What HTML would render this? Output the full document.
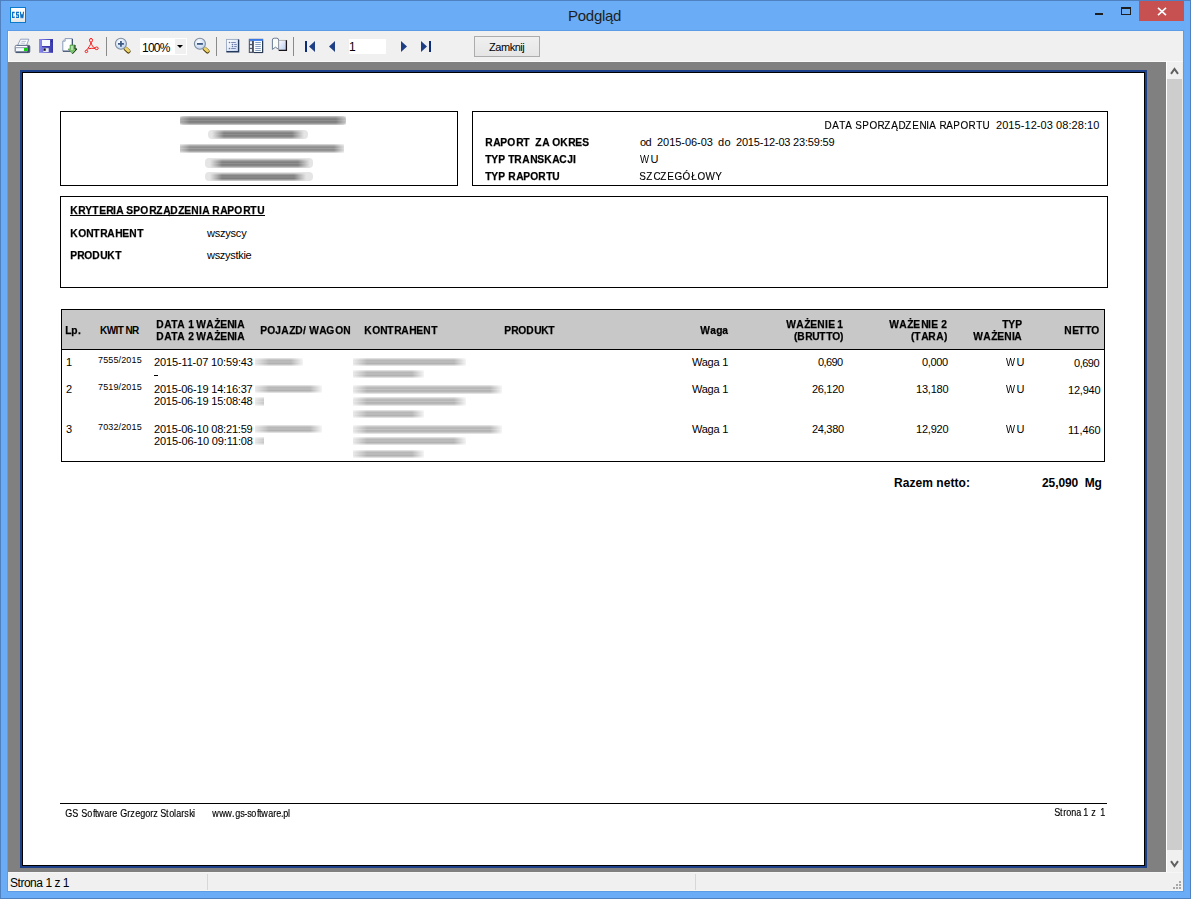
<!DOCTYPE html>
<html><head><meta charset="utf-8">
<style>
*{margin:0;padding:0;box-sizing:border-box}
html,body{width:1191px;height:899px;overflow:hidden;background:#6aacf5;font-family:"Liberation Sans",sans-serif;position:relative}
.a{position:absolute}
.t{position:absolute;white-space:pre;line-height:1;color:#000}
.bx{position:absolute;border:1px solid #000}
.bl{position:absolute;filter:blur(0.5px)}
.n{display:inline-block;transform:scaleX(0.93);-webkit-text-stroke:0.25px #000}
.nr{display:inline-block;transform:scaleX(0.9);-webkit-text-stroke:0.15px #000}
.wW{display:inline-block;transform:scaleX(0.87);transform-origin:0 0;width:10.6px}
</style></head><body>

<div class="a" style="left:0;top:0;width:1191px;height:899px;border:1px solid #4f80c0"></div>
<!-- app icon -->
<div class="a" style="left:10px;top:7px;width:16px;height:16px;border:1px solid #0a7acc;background:linear-gradient(#ffffff,#f4f4f4 60%,#e4e4e4)"></div>
<svg class="a" style="left:12px;top:11px" width="13" height="8" viewBox="0 0 13 8">
 <g fill="none" stroke="#0a6ec4" stroke-width="1.15">
 <path d="M2.1 2.3 V1.4 H0.6 V6.5 H2.1 V5.5"/>
 <path d="M6.4 2.3 V1.4 H4.6 V3.9 H6.4 V6.5 H4.6 V5.5"/>
 <path d="M8.4 0.8 L9.1 7.1 L9.95 3.4 L10.8 7.1 L11.5 0.8"/>
 </g>
</svg>
<!-- window controls -->
<div class="a" style="left:1095px;top:13px;width:8px;height:2px;background:#1e1e1e"></div>
<div class="a" style="left:1121px;top:7px;width:10px;height:8px;border:1px solid #1e1e1e;border-top-width:2px"></div>
<div class="a" style="left:1139px;top:1px;width:45px;height:20px;background:#c75050"></div>
<svg class="a" style="left:1157px;top:7px" width="10" height="9" viewBox="0 0 10 9">
 <path d="M1 0.8 L9 8.2 M9 0.8 L1 8.2" stroke="#fff" stroke-width="1.6"/>
</svg>
<!-- client border -->
<div class="a" style="left:7px;top:30px;width:1177px;height:862px;background:#5c9be6"></div>
<!-- toolbar -->
<div class="a" style="left:8px;top:31px;width:1175px;height:31px;background:#f0f0f0;border-left:1px solid #fbfbfb;border-bottom:1px solid #f9f9f9"></div>
<div class="a" style="left:106px;top:37px;width:1px;height:19px;background:#8a8a8a"></div>
<div class="a" style="left:216px;top:37px;width:1px;height:19px;background:#8a8a8a"></div>
<div class="a" style="left:293px;top:37px;width:1px;height:19px;background:#8a8a8a"></div>
<div class="a" style="left:140px;top:38px;width:47px;height:17px;background:#fff"></div>
<div class="a" style="left:175px;top:39px;width:11px;height:15px;background:#f0f0f0"></div>
<svg class="a" style="left:177px;top:45px" width="6" height="3" viewBox="0 0 6 3"><path d="M0 0 H6 L3 3 Z" fill="#000"/></svg>
<div class="a" style="left:349px;top:39px;width:37px;height:15px;background:#fff"></div>
<!-- nav -->
<svg class="a" style="left:300px;top:38px" width="140" height="18" viewBox="0 0 140 18">
 <rect x="5" y="3" width="2" height="11" fill="#0c2c78"/>
 <path d="M9 8.5 L15 3 V14 Z" fill="#1e3f86"/>
 <path d="M29 8.5 L35 3 V14 Z" fill="#1e3f86"/>
 <path d="M107 8.5 L101 3 V14 Z" fill="#1e3f86"/>
 <path d="M127 8.5 L121 3 V14 Z" fill="#1e3f86"/>
 <rect x="129" y="3" width="2" height="11" fill="#0c2c78"/>
</svg>
<!-- button -->
<div class="a" style="left:474px;top:36px;width:66px;height:21px;border:1px solid #acacac;background:linear-gradient(#f0f0f0,#e5e5e5)"></div>
<!-- view area -->
<div class="a" style="left:8px;top:61px;width:1159px;height:1px;background:#f9f9f9"></div>
<div class="a" style="left:8px;top:62px;width:1158px;height:810px;background:#808080"></div>
<div class="a" style="left:1166px;top:61px;width:1px;height:811px;background:#ffffff"></div>
<!-- vscroll -->
<div class="a" style="left:1167px;top:62px;width:15px;height:810px;background:#f0f0f0"></div>
<div class="a" style="left:1182px;top:62px;width:1px;height:810px;background:#ecebe8"></div>
<div class="a" style="left:1167px;top:79px;width:15px;height:771px;background:#cdcdcd"></div>
<svg class="a" style="left:1170px;top:67px" width="9" height="8" viewBox="0 0 9 8"><path d="M1 6.8 L4.5 2 L8 6.8" fill="none" stroke="#606060" stroke-width="2"/></svg>
<svg class="a" style="left:1170px;top:860px" width="9" height="8" viewBox="0 0 9 8"><path d="M1 1.2 L4.5 6 L8 1.2" fill="none" stroke="#606060" stroke-width="2"/></svg>
<!-- status -->
<div class="a" style="left:8px;top:872px;width:1175px;height:19px;background:#f0f0f0;border-top:1px solid #f6f6f6;border-bottom:1px solid #f8f6f2"></div>
<div class="a" style="left:207px;top:874px;width:1px;height:16px;background:#d7d7d7"></div>
<div class="a" style="left:695px;top:874px;width:1px;height:16px;background:#d7d7d7"></div>
<div class="a" style="left:1179px;top:881px;width:2px;height:2px;background:#a8a8a8"></div>
<div class="a" style="left:1176px;top:884px;width:2px;height:2px;background:#a8a8a8"></div>
<div class="a" style="left:1179px;top:884px;width:2px;height:2px;background:#a8a8a8"></div>
<div class="a" style="left:1173px;top:887px;width:2px;height:2px;background:#a8a8a8"></div>
<div class="a" style="left:1176px;top:887px;width:2px;height:2px;background:#a8a8a8"></div>
<div class="a" style="left:1179px;top:887px;width:2px;height:2px;background:#a8a8a8"></div>
<!-- page -->
<div class="a" style="left:20px;top:70px;width:1127px;height:798px;border:2px solid #1c3f8a;background:#000"></div>
<div class="a" style="left:23px;top:73px;width:1121px;height:792px;background:#fff"></div>


<!-- printer -->
<svg class="a" style="left:12px;top:36px" width="20" height="20" viewBox="0 0 20 20">
 <path d="M8.5 3.2 H16.8 L14.6 9.4 H5.6 Z" fill="#fbfcff" stroke="#8a9ab8" stroke-width="0.9"/>
 <path d="M9.5 5.4 H14 M8.6 7.2 H13" stroke="#a8b4c8" stroke-width="0.8"/>
 <rect x="3.2" y="9.4" width="14.6" height="7.2" rx="1.2" fill="#e8eef8" stroke="#50607a" stroke-width="0.9"/>
 <rect x="3.8" y="10" width="11.5" height="1.4" fill="#ffffff"/>
 <rect x="3.8" y="11.4" width="11.5" height="0.9" fill="#6a7890"/>
 <rect x="4" y="12.3" width="8" height="3.2" fill="#f4f8ff"/>
 <rect x="12" y="12" width="3" height="3" fill="#10d010"/>
 <rect x="15.4" y="9.6" width="2.3" height="7" fill="#3a4a66"/>
 <rect x="4" y="15.4" width="12" height="1.3" fill="#3a4a66"/>
</svg>
<!-- floppy -->
<svg class="a" style="left:36px;top:36px" width="20" height="20" viewBox="0 0 20 20">
 <defs><linearGradient id="fg" x1="0" y1="0" x2="1" y2="0"><stop offset="0" stop-color="#8c8cf2"/><stop offset="1" stop-color="#3434a8"/></linearGradient></defs>
 <rect x="3" y="3" width="14" height="13.8" fill="url(#fg)"/>
 <rect x="6" y="4" width="8" height="6.2" fill="#f6f8ff"/>
 <rect x="6" y="10.2" width="8" height="0.9" fill="#2a2aa0"/>
 <rect x="7.3" y="12.2" width="5.4" height="3.8" fill="#e8ecf8"/>
 <rect x="7.5" y="12.4" width="2.2" height="2.4" fill="#111"/>
 <rect x="15.1" y="4.8" width="1" height="1" fill="#222"/>
</svg>
<!-- export -->
<svg class="a" style="left:60px;top:36px" width="20" height="20" viewBox="0 0 20 20">
 <path d="M5.2 2.6 H12.3 V15.2 H2.8 V5.2 Z" fill="#fdfeff" stroke="#7c8fb0" stroke-width="0.9"/>
 <path d="M12.3 3 V15.2 H3" fill="none" stroke="#2e3f5e" stroke-width="1"/>
 <path d="M5.2 2.6 V5.2 H2.8" fill="#dfe8f0" stroke="#7c8fb0" stroke-width="0.8"/>
 <path d="M10 9 H15 V13 H17 L12.5 17.8 L8 13 H10 Z" fill="#78c06c" stroke="#4a9040" stroke-width="0.6"/>
 <path d="M15 9 V13 H17 L12.5 17.8" fill="none" stroke="#1a2a1a" stroke-width="0.9"/>
 <rect x="11.2" y="10" width="1.6" height="4" fill="#c0eab8"/>
</svg>
<!-- pdf -->
<svg class="a" style="left:82px;top:36px" width="20" height="20" viewBox="0 0 20 20">
 <g fill="none" stroke="#f41818" stroke-width="1.0">
 <ellipse cx="9" cy="4.3" rx="1.5" ry="1.9"/>
 <path d="M9 6.2 C9 9 6 12 4.5 14.3"/>
 <path d="M9 6.5 C9.5 9 11 11.3 13 12.2"/>
 <path d="M6.3 12.8 C8.5 12.3 10.8 12.2 13 12.3"/>
 <ellipse cx="14.6" cy="12.3" rx="1.6" ry="1.3"/>
 <ellipse cx="4.4" cy="15.4" rx="1.3" ry="1.2"/>
 </g>
</svg>
<!-- zoom in -->
<svg class="a" style="left:112px;top:36px" width="20" height="20" viewBox="0 0 20 20">
 <defs><radialGradient id="lg" cx="0.4" cy="0.35" r="0.7"><stop offset="0" stop-color="#ffffff"/><stop offset="1" stop-color="#b8d0f0"/></radialGradient></defs>
 <path d="M13.6 12.7 L16.5 15.4" stroke="#4a3808" stroke-width="4.2" stroke-linecap="round"/>
 <path d="M13.7 12.4 L16.5 14.9" stroke="#eed468" stroke-width="3" stroke-linecap="round"/>
 <circle cx="8.9" cy="7.8" r="5.5" fill="url(#lg)" stroke="#7e8c9e" stroke-width="1.1"/>
 <path d="M6 7.9 H11.9 M8.95 5 V10.8" stroke="#3e5a82" stroke-width="1.8"/>
</svg>
<!-- zoom out -->
<svg class="a" style="left:191px;top:36px" width="20" height="20" viewBox="0 0 20 20">
 <path d="M13.6 12.7 L16.5 15.4" stroke="#4a3808" stroke-width="4.2" stroke-linecap="round"/>
 <path d="M13.7 12.4 L16.5 14.9" stroke="#eed468" stroke-width="3" stroke-linecap="round"/>
 <circle cx="8.9" cy="7.8" r="5.5" fill="url(#lg)" stroke="#7e8c9e" stroke-width="1.1"/>
 <path d="M6 7.9 H11.9" stroke="#3e5a82" stroke-width="1.8"/>
</svg>
<!-- outline -->
<svg class="a" style="left:222px;top:36px" width="20" height="20" viewBox="0 0 20 20">
 <defs><linearGradient id="og" x1="0" y1="0" x2="1" y2="1"><stop offset="0" stop-color="#ffffff"/><stop offset="1" stop-color="#c8d8f4"/></linearGradient></defs>
 <rect x="4.5" y="3.4" width="12" height="12" fill="url(#og)" stroke="#9aaac4" stroke-width="0.9"/>
 <path d="M16.6 3.6 V15.8 H4.4" fill="none" stroke="#243a5c" stroke-width="1.4"/>
 <g fill="#6876a0"><circle cx="7.5" cy="6.5" r="0.8"/><circle cx="10.5" cy="8.5" r="0.8"/><circle cx="10.5" cy="10.5" r="0.8"/><circle cx="7.5" cy="12.5" r="0.8"/></g>
 <path d="M9.2 6.5 H13.8 M12.2 8.5 H14.8 M12.2 10.5 H14.8 M9.2 12.5 H13.8" stroke="#6e80ac" stroke-width="0.9"/>
</svg>
<!-- thumbnails -->
<svg class="a" style="left:246px;top:36px" width="20" height="20" viewBox="0 0 20 20">
 <rect x="3.2" y="3.2" width="13.6" height="13.4" fill="#f8fbff" stroke="#44546c" stroke-width="0.8"/>
 <rect x="3" y="3" width="14" height="1.9" fill="#3a78e6"/>
 <rect x="6" y="4.9" width="1.9" height="11.8" fill="#4a5060"/>
 <rect x="3" y="4.9" width="3" height="11.8" fill="#50586a"/>
 <rect x="3.9" y="5.3" width="2.1" height="2.6" fill="#f4f8ff"/>
 <rect x="3.9" y="9.2" width="2.1" height="2.6" fill="#f4f8ff"/>
 <rect x="3.9" y="13.1" width="2.1" height="2.6" fill="#f4f8ff"/>
 <path d="M16.6 4.8 V16.6 H8" fill="none" stroke="#20324e" stroke-width="1"/>
 <path d="M9.3 6.5 H14.8 M9.3 8.5 H14.8 M9.3 10.5 H14.8 M9.3 12.5 H14.8 M9.3 14.5 H14.8" stroke="#7a94b8" stroke-width="0.9"/>
</svg>
<!-- bookmark -->
<svg class="a" style="left:269px;top:35px" width="20" height="20" viewBox="0 0 20 20">
 <defs><linearGradient id="bg2" x1="0" y1="0" x2="1" y2="1"><stop offset="0" stop-color="#ffffff"/><stop offset="1" stop-color="#b4c8f0"/></linearGradient></defs>
 <path d="M3.4 14.4 V5 Q3.4 3.2 5.2 3.2 H7.8 Q9.6 3.2 9.6 5 V14.4 L6.5 12.2 Z" fill="#fafcfa" stroke="#5a6c8a" stroke-width="0.9"/>
 <rect x="9.8" y="5.3" width="7.6" height="10" fill="url(#bg2)" stroke="#9a9a9a" stroke-width="0.7"/>
 <path d="M17.4 5.2 V15.4 H9.8" fill="none" stroke="#1a1418" stroke-width="1.3"/>
</svg>


<div class="bx" style="left:60px;top:111px;width:398px;height:75px"></div>
<div class="bx" style="left:472px;top:111px;width:636px;height:75px"></div>
<div class="bx" style="left:60px;top:196px;width:1048px;height:92px"></div>
<div class="a" style="left:62px;top:310px;width:1042px;height:39px;background:#c8c8c8"></div>
<div class="bx" style="left:61px;top:309px;width:1044px;height:153px"></div>
<div class="a" style="left:61px;top:349px;width:1044px;height:1px;background:#000"></div>
<div class="a" style="left:70px;top:215px;width:195px;height:1px;background:#000"></div>
<div class="a" style="left:154px;top:375px;width:4px;height:1px;background:#000"></div>
<div class="a" style="left:60px;top:803px;width:1047px;height:1px;background:#000"></div>

<div class="bl" style="left:180px;top:116px;width:166px;height:9px;background:rgba(0,0,0,0.10);border-radius:4px"></div>
<div class="bl" style="left:180px;top:116px;width:166px;height:9px;background:linear-gradient(to bottom,rgba(0,0,0,0.10) 0%,rgba(0,0,0,0.30) 15%,rgba(0,0,0,0.46) 35%,rgba(0,0,0,0.38) 50%,rgba(0,0,0,0.48) 66%,rgba(0,0,0,0.30) 86%,rgba(0,0,0,0.08) 100%);-webkit-mask-image:linear-gradient(to right,rgba(0,0,0,0.5) 0px,#000 10px,#000 calc(100% - 10px),rgba(0,0,0,0.3) 100%)"></div>
<div class="bl" style="left:208px;top:129.5px;width:100px;height:9.0px;background:rgba(0,0,0,0.10);border-radius:4px"></div>
<div class="bl" style="left:212px;top:129.5px;width:92px;height:9.0px;background:linear-gradient(to bottom,rgba(0,0,0,0.06) 0%,rgba(0,0,0,0.28) 15%,rgba(0,0,0,0.46) 35%,rgba(0,0,0,0.38) 50%,rgba(0,0,0,0.48) 66%,rgba(0,0,0,0.28) 86%,rgba(0,0,0,0.05) 100%);-webkit-mask-image:linear-gradient(to right,rgba(0,0,0,0) 0px,#000 12px,#000 calc(100% - 12px),rgba(0,0,0,0) 100%)"></div>
<div class="bl" style="left:180px;top:144px;width:164px;height:9px;background:linear-gradient(to bottom,rgba(0,0,0,0.10) 0%,rgba(0,0,0,0.30) 15%,rgba(0,0,0,0.46) 35%,rgba(0,0,0,0.38) 50%,rgba(0,0,0,0.48) 66%,rgba(0,0,0,0.30) 86%,rgba(0,0,0,0.08) 100%);-webkit-mask-image:linear-gradient(to right,rgba(0,0,0,0.5) 0px,#000 10px,#000 calc(100% - 10px),rgba(0,0,0,0.3) 100%)"></div>
<div class="bl" style="left:205px;top:158px;width:108px;height:10px;background:rgba(0,0,0,0.10);border-radius:4px"></div>
<div class="bl" style="left:210px;top:158.5px;width:100px;height:9.0px;background:linear-gradient(to bottom,rgba(0,0,0,0.06) 0%,rgba(0,0,0,0.28) 15%,rgba(0,0,0,0.46) 35%,rgba(0,0,0,0.38) 50%,rgba(0,0,0,0.48) 66%,rgba(0,0,0,0.28) 86%,rgba(0,0,0,0.05) 100%);-webkit-mask-image:linear-gradient(to right,rgba(0,0,0,0) 0px,#000 12px,#000 calc(100% - 12px),rgba(0,0,0,0) 100%)"></div>
<div class="bl" style="left:205px;top:172px;width:108px;height:9px;background:rgba(0,0,0,0.10);border-radius:4px"></div>
<div class="bl" style="left:210px;top:172.5px;width:96px;height:8.5px;background:linear-gradient(to bottom,rgba(0,0,0,0.06) 0%,rgba(0,0,0,0.28) 15%,rgba(0,0,0,0.46) 35%,rgba(0,0,0,0.38) 50%,rgba(0,0,0,0.48) 66%,rgba(0,0,0,0.28) 86%,rgba(0,0,0,0.05) 100%);-webkit-mask-image:linear-gradient(to right,rgba(0,0,0,0) 0px,#000 12px,#000 calc(100% - 12px),rgba(0,0,0,0) 100%)"></div>
<div class="bl" style="left:255px;top:358px;width:48px;height:8px;background:linear-gradient(to bottom,rgba(0,0,0,0.08) 0%,rgba(0,0,0,0.2) 15%,rgba(0,0,0,0.30) 35%,rgba(0,0,0,0.24) 50%,rgba(0,0,0,0.32) 66%,rgba(0,0,0,0.2) 86%,rgba(0,0,0,0.06) 100%);-webkit-mask-image:linear-gradient(to right,rgba(0,0,0,0.3) 0px,#000 14px,#000 calc(100% - 12px),rgba(0,0,0,0.15) 100%)"></div>
<div class="bl" style="left:255px;top:385px;width:67px;height:8px;background:linear-gradient(to bottom,rgba(0,0,0,0.08) 0%,rgba(0,0,0,0.2) 15%,rgba(0,0,0,0.30) 35%,rgba(0,0,0,0.24) 50%,rgba(0,0,0,0.32) 66%,rgba(0,0,0,0.2) 86%,rgba(0,0,0,0.06) 100%);-webkit-mask-image:linear-gradient(to right,rgba(0,0,0,0.3) 0px,#000 14px,#000 calc(100% - 12px),rgba(0,0,0,0.15) 100%)"></div>
<div class="bl" style="left:255px;top:396.5px;width:9px;height:9.0px;background:linear-gradient(to bottom,rgba(0,0,0,0.08) 0%,rgba(0,0,0,0.2) 15%,rgba(0,0,0,0.30) 35%,rgba(0,0,0,0.24) 50%,rgba(0,0,0,0.32) 66%,rgba(0,0,0,0.2) 86%,rgba(0,0,0,0.06) 100%);-webkit-mask-image:linear-gradient(to right,rgba(0,0,0,0.3) 0px,#000 14px,#000 calc(100% - 12px),rgba(0,0,0,0.15) 100%)"></div>
<div class="bl" style="left:255px;top:425px;width:67px;height:8px;background:linear-gradient(to bottom,rgba(0,0,0,0.08) 0%,rgba(0,0,0,0.2) 15%,rgba(0,0,0,0.30) 35%,rgba(0,0,0,0.24) 50%,rgba(0,0,0,0.32) 66%,rgba(0,0,0,0.2) 86%,rgba(0,0,0,0.06) 100%);-webkit-mask-image:linear-gradient(to right,rgba(0,0,0,0.3) 0px,#000 14px,#000 calc(100% - 12px),rgba(0,0,0,0.15) 100%)"></div>
<div class="bl" style="left:255px;top:437px;width:9px;height:8px;background:linear-gradient(to bottom,rgba(0,0,0,0.08) 0%,rgba(0,0,0,0.2) 15%,rgba(0,0,0,0.30) 35%,rgba(0,0,0,0.24) 50%,rgba(0,0,0,0.32) 66%,rgba(0,0,0,0.2) 86%,rgba(0,0,0,0.06) 100%);-webkit-mask-image:linear-gradient(to right,rgba(0,0,0,0.3) 0px,#000 14px,#000 calc(100% - 12px),rgba(0,0,0,0.15) 100%)"></div>
<div class="bl" style="left:353px;top:358px;width:113px;height:8px;background:linear-gradient(to bottom,rgba(0,0,0,0.08) 0%,rgba(0,0,0,0.2) 15%,rgba(0,0,0,0.30) 35%,rgba(0,0,0,0.24) 50%,rgba(0,0,0,0.32) 66%,rgba(0,0,0,0.2) 86%,rgba(0,0,0,0.06) 100%);-webkit-mask-image:linear-gradient(to right,rgba(0,0,0,0.3) 0px,#000 14px,#000 calc(100% - 12px),rgba(0,0,0,0.15) 100%)"></div>
<div class="bl" style="left:353px;top:370px;width:71px;height:8px;background:linear-gradient(to bottom,rgba(0,0,0,0.08) 0%,rgba(0,0,0,0.2) 15%,rgba(0,0,0,0.30) 35%,rgba(0,0,0,0.24) 50%,rgba(0,0,0,0.32) 66%,rgba(0,0,0,0.2) 86%,rgba(0,0,0,0.06) 100%);-webkit-mask-image:linear-gradient(to right,rgba(0,0,0,0.3) 0px,#000 14px,#000 calc(100% - 12px),rgba(0,0,0,0.15) 100%)"></div>
<div class="bl" style="left:353px;top:385px;width:149px;height:8.5px;background:linear-gradient(to bottom,rgba(0,0,0,0.08) 0%,rgba(0,0,0,0.2) 15%,rgba(0,0,0,0.30) 35%,rgba(0,0,0,0.24) 50%,rgba(0,0,0,0.32) 66%,rgba(0,0,0,0.2) 86%,rgba(0,0,0,0.06) 100%);-webkit-mask-image:linear-gradient(to right,rgba(0,0,0,0.3) 0px,#000 14px,#000 calc(100% - 12px),rgba(0,0,0,0.15) 100%)"></div>
<div class="bl" style="left:353px;top:396.5px;width:113px;height:9.0px;background:linear-gradient(to bottom,rgba(0,0,0,0.08) 0%,rgba(0,0,0,0.2) 15%,rgba(0,0,0,0.30) 35%,rgba(0,0,0,0.24) 50%,rgba(0,0,0,0.32) 66%,rgba(0,0,0,0.2) 86%,rgba(0,0,0,0.06) 100%);-webkit-mask-image:linear-gradient(to right,rgba(0,0,0,0.3) 0px,#000 14px,#000 calc(100% - 12px),rgba(0,0,0,0.15) 100%)"></div>
<div class="bl" style="left:353px;top:410px;width:71px;height:8px;background:linear-gradient(to bottom,rgba(0,0,0,0.08) 0%,rgba(0,0,0,0.2) 15%,rgba(0,0,0,0.30) 35%,rgba(0,0,0,0.24) 50%,rgba(0,0,0,0.32) 66%,rgba(0,0,0,0.2) 86%,rgba(0,0,0,0.06) 100%);-webkit-mask-image:linear-gradient(to right,rgba(0,0,0,0.3) 0px,#000 14px,#000 calc(100% - 12px),rgba(0,0,0,0.15) 100%)"></div>
<div class="bl" style="left:353px;top:425px;width:149px;height:9px;background:linear-gradient(to bottom,rgba(0,0,0,0.08) 0%,rgba(0,0,0,0.2) 15%,rgba(0,0,0,0.30) 35%,rgba(0,0,0,0.24) 50%,rgba(0,0,0,0.32) 66%,rgba(0,0,0,0.2) 86%,rgba(0,0,0,0.06) 100%);-webkit-mask-image:linear-gradient(to right,rgba(0,0,0,0.3) 0px,#000 14px,#000 calc(100% - 12px),rgba(0,0,0,0.15) 100%)"></div>
<div class="bl" style="left:353px;top:436.5px;width:113px;height:8.5px;background:linear-gradient(to bottom,rgba(0,0,0,0.08) 0%,rgba(0,0,0,0.2) 15%,rgba(0,0,0,0.30) 35%,rgba(0,0,0,0.24) 50%,rgba(0,0,0,0.32) 66%,rgba(0,0,0,0.2) 86%,rgba(0,0,0,0.06) 100%);-webkit-mask-image:linear-gradient(to right,rgba(0,0,0,0.3) 0px,#000 14px,#000 calc(100% - 12px),rgba(0,0,0,0.15) 100%)"></div>
<div class="bl" style="left:353px;top:450px;width:71px;height:8px;background:linear-gradient(to bottom,rgba(0,0,0,0.08) 0%,rgba(0,0,0,0.2) 15%,rgba(0,0,0,0.30) 35%,rgba(0,0,0,0.24) 50%,rgba(0,0,0,0.32) 66%,rgba(0,0,0,0.2) 86%,rgba(0,0,0,0.06) 100%);-webkit-mask-image:linear-gradient(to right,rgba(0,0,0,0.3) 0px,#000 14px,#000 calc(100% - 12px),rgba(0,0,0,0.15) 100%)"></div>
<div class="t" style="left:824px;top:120px;font-size:11px;font-weight:normal;letter-spacing:-0.358px;color:#000"><span class="nr">D</span><span class="nr">A</span><span class="nr">T</span><span class="nr">A</span> <span class="nr">S</span><span class="nr">P</span><span class="nr">O</span><span class="nr">R</span><span class="nr">Z</span><span class="nr">Ą</span><span class="nr">D</span><span class="nr">Z</span><span class="nr">E</span><span class="nr">N</span><span class="nr">I</span><span class="nr">A</span> <span class="nr">R</span><span class="nr">A</span><span class="nr">P</span><span class="nr">O</span><span class="nr">R</span><span class="nr">T</span><span class="nr">U</span></div>
<div class="t" style="left:996px;top:120px;font-size:11px;font-weight:normal;letter-spacing:0.067px;color:#000">2015-12-03 08:28:10</div>
<div class="t" style="left:485px;top:137px;font-size:11px;font-weight:bold;letter-spacing:-0.313px;color:#000"><span class="n">R</span><span class="n">A</span><span class="n">P</span><span class="n">O</span><span class="n">R</span><span class="n">T</span>  <span class="n">Z</span><span class="n">A</span> <span class="n">O</span><span class="n">K</span><span class="n">R</span><span class="n">E</span><span class="n">S</span></div>
<div class="t" style="left:640px;top:137px;font-size:11px;font-weight:normal;letter-spacing:-0.5px;color:#000">od</div>
<div class="t" style="left:657px;top:137px;font-size:11px;font-weight:normal;letter-spacing:-0.044px;color:#000">2015-06-03</div>
<div class="t" style="left:718px;top:137px;font-size:11px;font-weight:normal;letter-spacing:0.3px;color:#000">do</div>
<div class="t" style="left:736px;top:137px;font-size:11px;font-weight:normal;letter-spacing:-0.2px;color:#000">2015-12-03 23:59:59</div>
<div class="t" style="left:485px;top:154px;font-size:11px;font-weight:bold;letter-spacing:-0.354px;color:#000"><span class="n">T</span><span class="n">Y</span><span class="n">P</span> <span class="n">T</span><span class="n">R</span><span class="n">A</span><span class="n">N</span><span class="n">S</span><span class="n">K</span><span class="n">A</span><span class="n">C</span><span class="n">J</span><span class="n">I</span></div>
<div class="t" style="left:640px;top:154px;font-size:11px;font-weight:normal;letter-spacing:0px;color:#000"><span class="wW">W</span>U</div>
<div class="t" style="left:485px;top:171px;font-size:11px;font-weight:bold;letter-spacing:-0.38px;color:#000"><span class="n">T</span><span class="n">Y</span><span class="n">P</span> <span class="n">R</span><span class="n">A</span><span class="n">P</span><span class="n">O</span><span class="n">R</span><span class="n">T</span><span class="n">U</span></div>
<div class="t" style="left:639px;top:171px;font-size:11px;font-weight:normal;letter-spacing:-0.2px;color:#000"><span class="nr">S</span><span class="nr">Z</span><span class="nr">C</span><span class="nr">Z</span><span class="nr">E</span><span class="nr">G</span><span class="nr">Ó</span><span class="nr">Ł</span><span class="nr">O</span><span class="nr">W</span><span class="nr">Y</span></div>
<div class="t" style="left:70px;top:205px;font-size:11px;font-weight:bold;letter-spacing:-0.329px;color:#000"><span class="n">K</span><span class="n">R</span><span class="n">Y</span><span class="n">T</span><span class="n">E</span><span class="n">R</span><span class="n">I</span><span class="n">A</span> <span class="n">S</span><span class="n">P</span><span class="n">O</span><span class="n">R</span><span class="n">Z</span><span class="n">Ą</span><span class="n">D</span><span class="n">Z</span><span class="n">E</span><span class="n">N</span><span class="n">I</span><span class="n">A</span> <span class="n">R</span><span class="n">A</span><span class="n">P</span><span class="n">O</span><span class="n">R</span><span class="n">T</span><span class="n">U</span></div>
<div class="t" style="left:70px;top:228px;font-size:11px;font-weight:bold;letter-spacing:-0.422px;color:#000"><span class="n">K</span><span class="n">O</span><span class="n">N</span><span class="n">T</span><span class="n">R</span><span class="n">A</span><span class="n">H</span><span class="n">E</span><span class="n">N</span><span class="n">T</span></div>
<div class="t" style="left:207px;top:228px;font-size:11px;font-weight:normal;letter-spacing:-0.217px;color:#000">wszyscy</div>
<div class="t" style="left:70px;top:250px;font-size:11px;font-weight:bold;letter-spacing:-0.5px;color:#000"><span class="n">P</span><span class="n">R</span><span class="n">O</span><span class="n">D</span><span class="n">U</span><span class="n">K</span><span class="n">T</span></div>
<div class="t" style="left:207px;top:250px;font-size:11px;font-weight:normal;letter-spacing:-0.3px;color:#000">wszystkie</div>
<div class="t" style="left:65px;top:325px;font-size:11px;font-weight:bold;letter-spacing:-0.35px;color:#000"><span class="n">L</span><span class="n">p</span><span class="n">.</span></div>
<div class="t" style="left:100px;top:326px;font-size:10px;font-weight:bold;letter-spacing:-0.583px;color:#000">KWIT NR</div>
<div class="t" style="left:156px;top:319px;font-size:11px;font-weight:bold;letter-spacing:-0.408px;color:#000"><span class="n">D</span><span class="n">A</span><span class="n">T</span><span class="n">A</span> <span class="n">1</span> <span class="n">W</span><span class="n">A</span><span class="n">Ż</span><span class="n">E</span><span class="n">N</span><span class="n">I</span><span class="n">A</span></div>
<div class="t" style="left:156px;top:331px;font-size:11px;font-weight:bold;letter-spacing:-0.408px;color:#000"><span class="n">D</span><span class="n">A</span><span class="n">T</span><span class="n">A</span> <span class="n">2</span> <span class="n">W</span><span class="n">A</span><span class="n">Ż</span><span class="n">E</span><span class="n">N</span><span class="n">I</span><span class="n">A</span></div>
<div class="t" style="left:260px;top:325px;font-size:11px;font-weight:bold;letter-spacing:-0.283px;color:#000"><span class="n">P</span><span class="n">O</span><span class="n">J</span><span class="n">A</span><span class="n">Z</span><span class="n">D</span><span class="n">/</span> <span class="n">W</span><span class="n">A</span><span class="n">G</span><span class="n">O</span><span class="n">N</span></div>
<div class="t" style="left:364px;top:325px;font-size:11px;font-weight:bold;letter-spacing:-0.422px;color:#000"><span class="n">K</span><span class="n">O</span><span class="n">N</span><span class="n">T</span><span class="n">R</span><span class="n">A</span><span class="n">H</span><span class="n">E</span><span class="n">N</span><span class="n">T</span></div>
<div class="t" style="left:504px;top:325px;font-size:11px;font-weight:bold;letter-spacing:-0.567px;color:#000"><span class="n">P</span><span class="n">R</span><span class="n">O</span><span class="n">D</span><span class="n">U</span><span class="n">K</span><span class="n">T</span></div>
<div class="t" style="left:700px;top:325px;font-size:11px;font-weight:bold;letter-spacing:-0.4px;color:#000"><span class="n">W</span><span class="n">a</span><span class="n">g</span><span class="n">a</span></div>
<div class="t" style="left:786px;top:319px;font-size:11px;font-weight:bold;letter-spacing:-0.3px;color:#000"><span class="n">W</span><span class="n">A</span><span class="n">Ż</span><span class="n">E</span><span class="n">N</span><span class="n">I</span><span class="n">E</span> <span class="n">1</span></div>
<div class="t" style="left:794px;top:331px;font-size:11px;font-weight:bold;letter-spacing:-0.529px;color:#000"><span class="n">(</span><span class="n">B</span><span class="n">R</span><span class="n">U</span><span class="n">T</span><span class="n">T</span><span class="n">O</span><span class="n">)</span></div>
<div class="t" style="left:889px;top:319px;font-size:11px;font-weight:bold;letter-spacing:-0.2px;color:#000"><span class="n">W</span><span class="n">A</span><span class="n">Ż</span><span class="n">E</span><span class="n">N</span><span class="n">I</span><span class="n">E</span> <span class="n">2</span></div>
<div class="t" style="left:911px;top:331px;font-size:11px;font-weight:bold;letter-spacing:-0.34px;color:#000"><span class="n">(</span><span class="n">T</span><span class="n">A</span><span class="n">R</span><span class="n">A</span><span class="n">)</span></div>
<div class="t" style="left:1002px;top:319px;font-size:11px;font-weight:bold;letter-spacing:-0.3px;color:#000"><span class="n">T</span><span class="n">Y</span><span class="n">P</span></div>
<div class="t" style="left:973px;top:331px;font-size:11px;font-weight:bold;letter-spacing:-0.367px;color:#000"><span class="n">W</span><span class="n">A</span><span class="n">Ż</span><span class="n">E</span><span class="n">N</span><span class="n">I</span><span class="n">A</span></div>
<div class="t" style="left:1064px;top:325px;font-size:11px;font-weight:bold;letter-spacing:-0.425px;color:#000"><span class="n">N</span><span class="n">E</span><span class="n">T</span><span class="n">T</span><span class="n">O</span></div>
<div class="t" style="left:66px;top:357px;font-size:11px;font-weight:normal;letter-spacing:0.0px;color:#000">1</div>
<div class="t" style="left:98px;top:356px;font-size:9px;font-weight:normal;letter-spacing:0.138px;color:#000">7555/2015</div>
<div class="t" style="left:154px;top:357px;font-size:11px;font-weight:normal;letter-spacing:-0.133px;color:#000">2015-11-07 10:59:43</div>
<div class="t" style="left:692px;top:357px;font-size:11px;font-weight:normal;letter-spacing:-0.24px;color:#000">Waga 1</div>
<div class="t" style="left:818px;top:357px;font-size:11px;font-weight:normal;letter-spacing:-0.575px;color:#000">0,690</div>
<div class="t" style="left:922px;top:357px;font-size:11px;font-weight:normal;letter-spacing:-0.375px;color:#000">0,000</div>
<div class="t" style="left:1006px;top:357px;font-size:11px;font-weight:normal;letter-spacing:0px;color:#000"><span class="wW">W</span>U</div>
<div class="t" style="left:1074px;top:358px;font-size:11px;font-weight:normal;letter-spacing:-0.475px;color:#000">0,690</div>
<div class="t" style="left:66px;top:384px;font-size:11px;font-weight:normal;letter-spacing:0.0px;color:#000">2</div>
<div class="t" style="left:98px;top:383px;font-size:9px;font-weight:normal;letter-spacing:0.138px;color:#000">7519/2015</div>
<div class="t" style="left:154px;top:384px;font-size:11px;font-weight:normal;letter-spacing:-0.189px;color:#000">2015-06-19 14:16:37</div>
<div class="t" style="left:154px;top:396px;font-size:11px;font-weight:normal;letter-spacing:-0.189px;color:#000">2015-06-19 15:08:48</div>
<div class="t" style="left:692px;top:384px;font-size:11px;font-weight:normal;letter-spacing:-0.24px;color:#000">Waga 1</div>
<div class="t" style="left:812px;top:384px;font-size:11px;font-weight:normal;letter-spacing:-0.32px;color:#000">26,120</div>
<div class="t" style="left:916px;top:384px;font-size:11px;font-weight:normal;letter-spacing:-0.22px;color:#000">13,180</div>
<div class="t" style="left:1006px;top:384px;font-size:11px;font-weight:normal;letter-spacing:0px;color:#000"><span class="wW">W</span>U</div>
<div class="t" style="left:1068px;top:385px;font-size:11px;font-weight:normal;letter-spacing:-0.22px;color:#000">12,940</div>
<div class="t" style="left:66px;top:424px;font-size:11px;font-weight:normal;letter-spacing:0.0px;color:#000">3</div>
<div class="t" style="left:98px;top:423px;font-size:9px;font-weight:normal;letter-spacing:0.138px;color:#000">7032/2015</div>
<div class="t" style="left:154px;top:424px;font-size:11px;font-weight:normal;letter-spacing:-0.189px;color:#000">2015-06-10 08:21:59</div>
<div class="t" style="left:154px;top:436px;font-size:11px;font-weight:normal;letter-spacing:-0.133px;color:#000">2015-06-10 09:11:08</div>
<div class="t" style="left:692px;top:424px;font-size:11px;font-weight:normal;letter-spacing:-0.24px;color:#000">Waga 1</div>
<div class="t" style="left:812px;top:424px;font-size:11px;font-weight:normal;letter-spacing:-0.32px;color:#000">24,380</div>
<div class="t" style="left:916px;top:424px;font-size:11px;font-weight:normal;letter-spacing:-0.22px;color:#000">12,920</div>
<div class="t" style="left:1006px;top:424px;font-size:11px;font-weight:normal;letter-spacing:0px;color:#000"><span class="wW">W</span>U</div>
<div class="t" style="left:1068px;top:425px;font-size:11px;font-weight:normal;letter-spacing:-0.02px;color:#000">11,460</div>
<div class="t" style="left:894px;top:477px;font-size:12px;font-weight:bold;letter-spacing:0.055px;color:#000">Razem netto:</div>
<div class="t" style="left:1042px;top:477px;font-size:12px;font-weight:bold;letter-spacing:-0.089px;color:#000">25,090  Mg</div>
<div class="t" style="left:65px;top:809px;font-size:10px;font-weight:normal;letter-spacing:-0.393px;color:#000"><span class="nr">G</span><span class="nr">S</span> <span class="nr">S</span><span class="nr">o</span><span class="nr">f</span><span class="nr">t</span><span class="nr">w</span><span class="nr">a</span><span class="nr">r</span><span class="nr">e</span> <span class="nr">G</span><span class="nr">r</span><span class="nr">z</span><span class="nr">e</span><span class="nr">g</span><span class="nr">o</span><span class="nr">r</span><span class="nr">z</span> <span class="nr">S</span><span class="nr">t</span><span class="nr">o</span><span class="nr">l</span><span class="nr">a</span><span class="nr">r</span><span class="nr">s</span><span class="nr">k</span><span class="nr">i</span></div>
<div class="t" style="left:212px;top:809px;font-size:10px;font-weight:normal;letter-spacing:-0.494px;color:#000"><span class="nr">w</span><span class="nr">w</span><span class="nr">w</span><span class="nr">.</span><span class="nr">g</span><span class="nr">s</span><span class="nr">-</span><span class="nr">s</span><span class="nr">o</span><span class="nr">f</span><span class="nr">t</span><span class="nr">w</span><span class="nr">a</span><span class="nr">r</span><span class="nr">e</span><span class="nr">.</span><span class="nr">p</span><span class="nr">l</span></div>
<div class="t" style="left:1054px;top:808px;font-size:10px;font-weight:normal;letter-spacing:-0.417px;color:#000"><span class="nr">S</span><span class="nr">t</span><span class="nr">r</span><span class="nr">o</span><span class="nr">n</span><span class="nr">a</span> <span class="nr">1</span> <span class="nr">z</span>  <span class="nr">1</span></div>
<div class="t" style="left:568px;top:8px;font-size:15px;font-weight:normal;letter-spacing:-0.267px;color:#1e1e1e">Podgląd</div>
<div class="t" style="left:142px;top:42px;font-size:12px;font-weight:normal;letter-spacing:-0.767px;color:#000">100%</div>
<div class="t" style="left:349px;top:41px;font-size:12px;font-weight:normal;letter-spacing:0.0px;color:#000">1</div>
<div class="t" style="left:489px;top:42px;font-size:11px;font-weight:normal;letter-spacing:-0.45px;color:#000">Zamknij</div>
<div class="t" style="left:10px;top:877px;font-size:12px;font-weight:normal;letter-spacing:-0.473px;color:#000">Strona 1 z 1</div>
</body></html>
